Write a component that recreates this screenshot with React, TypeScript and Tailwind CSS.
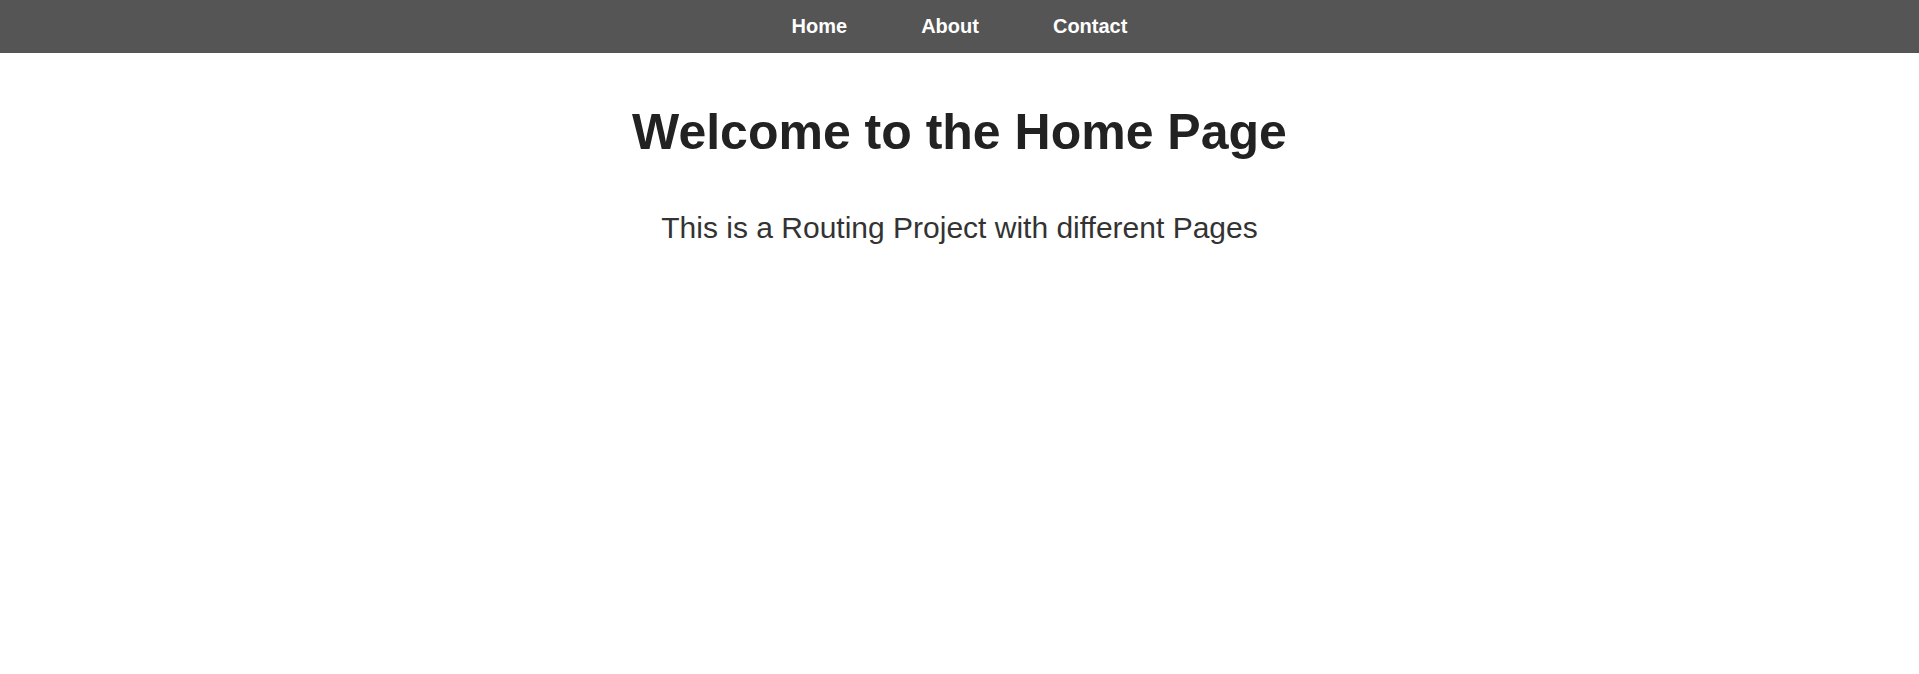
const NAV_LINKS = ["Home", "About", "Contact"];

export default function App() {
  return (
    <div className="min-h-screen bg-white font-['Liberation_Sans',Arial,sans-serif]">
      <nav className="flex h-[53px] items-center justify-center gap-[74px] bg-[#555555]">
        {NAV_LINKS.map((label) => (
          <a
            key={label}
            href="#"
            className="text-[20px] font-bold leading-[normal] text-white"
          >
            {label}
          </a>
        ))}
      </nav>

      <main className="flex flex-col items-center pt-[50px] text-center">
        <h1 className="text-[50px] font-bold leading-[normal] text-[#222222]">
          Welcome to the Home Page
        </h1>
        <p className="mt-[50px] text-[30px] leading-[normal] text-[#333333]">
          This is a Routing Project with different Pages
        </p>
      </main>
    </div>
  );
}
